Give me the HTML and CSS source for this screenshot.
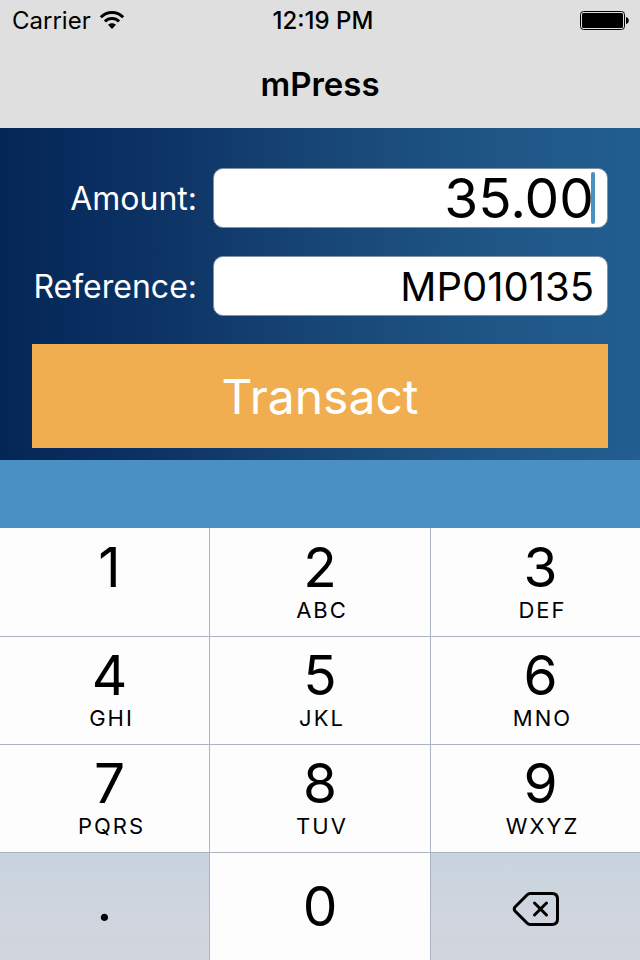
FILE: index.html
```html
<!DOCTYPE html>
<html lang="en">
<head>
  <meta charset="UTF-8">
  <meta name="viewport" content="width=device-width, initial-scale=1.0">
  <title>mPress</title>
  <link rel="stylesheet" href="styles.css">
</head>
<body>

  <header class="header">
    <div class="status">
      <div class="carrier">
        <span>Carrier</span>
        <svg width="26" height="20" viewBox="0 0 26 20" aria-hidden="true">
          <g fill="none" stroke="#000" stroke-width="3">
            <path d="M1.8 7.2C8 .9 18 .9 24.2 7.2"/>
            <path d="M5.9 11.4C9.8 7.5 16.2 7.5 20.1 11.4"/>
          </g>
          <path d="M13 19L9 14.8C11 12.7 15 12.7 17 14.8Z"/>
        </svg>
      </div>
      <span class="time">12:19 PM</span>
      <div class="battery">
        <svg width="49" height="19" viewBox="0 0 49 19" aria-hidden="true">
          <rect x=".5" y=".5" width="44" height="18" rx="3" fill="none" stroke="#000"/>
          <rect x="2" y="2" width="41" height="15" rx="1.5"/>
          <path d="M46 6C49.7 6.5 49.7 12.5 46 13Z"/>
        </svg>
      </div>
    </div>
    <h1>mPress</h1>
  </header>

  <form class="form" id="transactForm">
    <label for="amount">Amount:</label>
    <div class="field">
      <input class="amount" type="text" id="amount" value="35.00" inputmode="decimal">
      <span class="caret"></span>
    </div>

    <label for="reference">Reference:</label>
    <div class="field">
      <input type="text" id="reference" value="MP010135">
    </div>

    <button class="transact" type="button">Transact</button>
  </form>

  <div class="accessory"></div>

  <div class="keypad">
    <button class="key side" type="button">1</button>
    <button class="key" type="button">2<small>ABC</small></button>
    <button class="key side" type="button">3<small>DEF</small></button>

    <button class="key side" type="button">4<small>GHI</small></button>
    <button class="key" type="button">5<small>JKL</small></button>
    <button class="key side" type="button">6<small>MNO</small></button>

    <button class="key side" type="button">7<small>PQRS</small></button>
    <button class="key" type="button">8<small>TUV</small></button>
    <button class="key side" type="button">9<small>WXYZ</small></button>

    <button class="key single gray point" type="button">.</button>
    <button class="key single" type="button">0</button>
    <button class="key single gray" type="button" aria-label="Delete">
      <svg width="48" height="40" viewBox="0 -4 48 40" fill="none" stroke="#000" stroke-width="3" stroke-linecap="round" stroke-linejoin="round" aria-hidden="true">
        <path d="M18 2.5H40Q45.5 2.5 45.5 8V28Q45.5 33.5 40 33.5H18Q16.5 33.5 15 32L3 20Q1.5 18 3 16L15 4Q16.5 2.5 18 2.5Z"/>
        <path d="M22.5 12L34.5 24M34.5 12L22.5 24"/>
      </svg>
    </button>
  </div>

</body>
</html>
```
FILE: styles.css
```css
* {
  box-sizing: border-box;
}
body {
  margin: 0;
  background-color: #4a90c2;
  color: black;
  font-family: Inter, "Liberation Sans", sans-serif;
}
.header {
  height: 128px;
  background-color: #dfdfdf;
}
.status {
  display: grid;
  grid-template-columns: 1fr auto 1fr;
  align-items: center;
  height: 40px;
  padding: 0 11px 0 12px;
  font-size: 24px;
}
.carrier {
  display: flex;
  align-items: center;
  gap: 8px;
}
.time {
  padding-left: 5px;
  font-weight: 500;
}
.battery {
  display: flex;
  justify-content: flex-end;
}
h1 {
  margin: 0;
  font-size: 33px;
  font-weight: 600;
  line-height: 88px;
  text-align: center;
}
.form {
  display: grid;
  grid-template-columns: 165px 1fr;
  align-items: center;
  gap: 28px 16px;
  padding: 40px 32px 12px;
  background: linear-gradient(to right, #032656, #0d3365 25%, #174675 50%, #1e5585 75%, #225e90);
}
label {
  color: white;
  font-size: 32px;
  text-align: right;
}
.field {
  position: relative;
}
input {
  display: block;
  width: 100%;
  height: 60px;
  padding: 0 13px;
  border: 1px solid #8391a5;
  border-radius: 10px;
  background-color: white;
  color: black;
  font-family: inherit;
  font-size: 40px;
  text-align: right;
}
.amount {
  font-size: 55px;
}
.caret {
  position: absolute;
  top: 4px;
  right: 13px;
  width: 4px;
  height: 52px;
  border-radius: 2px;
  background-color: #4a90c2;
}
.transact {
  grid-column: 1 / 3;
  height: 104px;
  border: none;
  background-color: #f0ae50;
  color: white;
  font-family: inherit;
  font-size: 48px;
}
.accessory {
  height: 68px;
}
.keypad {
  display: grid;
  grid-template-columns: 19fr 20fr 19fr;
  grid-auto-rows: 108px;
  column-gap: 1px;
  background-color: #acb4c4;
}
.key {
  display: flex;
  flex-direction: column;
  align-items: center;
  padding: 10px 0 0;
  border: none;
  border-top: 1px solid #acb4c4;
  background-color: #fdfdfe;
  color: black;
  font-family: inherit;
  font-size: 55px;
  line-height: 56px;
}
.key:nth-child(-n+3) {
  padding-top: 11px;
  border-top: none;
}
.side {
  padding-left: 10px;
}
.key small {
  padding-left: 4px;
  font-size: 22px;
  line-height: 30px;
  letter-spacing: 2px;
}
.single {
  justify-content: center;
  padding: 0 0 2px;
}
.gray {
  padding: 0;
  background: linear-gradient(#c8d3df, #d0d5de 60%, #d1d5dd);
}
.point {
  padding-bottom: 12px;
}
```
